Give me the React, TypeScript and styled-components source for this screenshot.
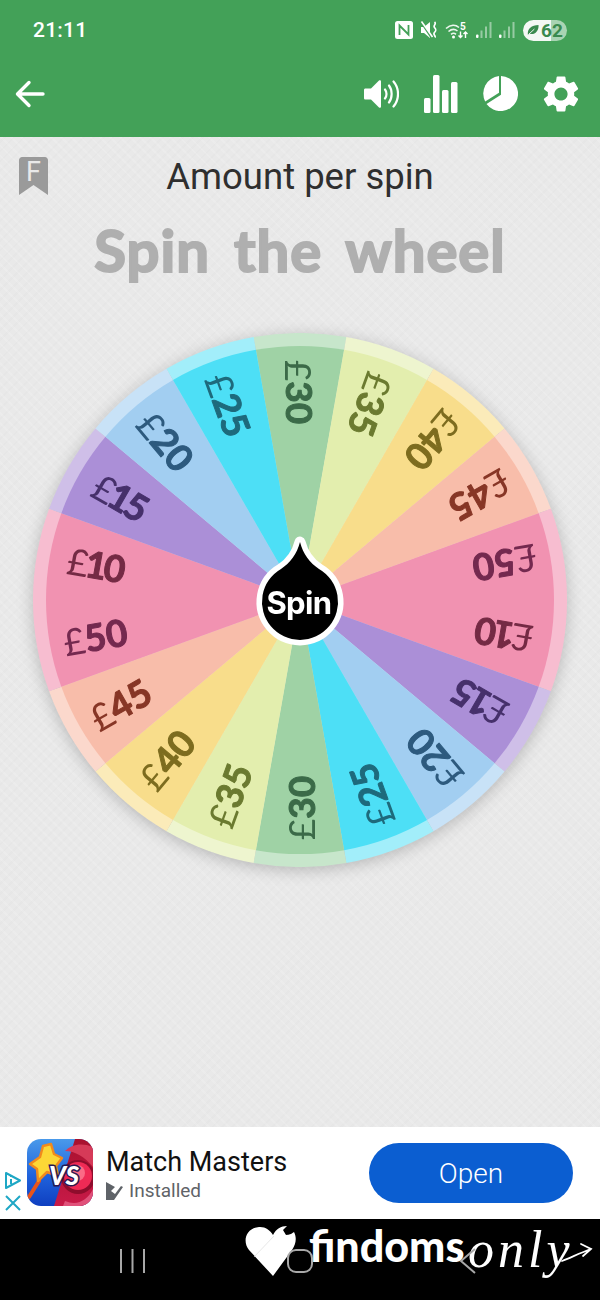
import React from "react";
import styled, { createGlobalStyle } from "styled-components";
import { MdSettings } from "react-icons/md";

const Global = createGlobalStyle`
  html, body { margin: 0; padding: 0; background: #000; }
  #root { width: 600px; height: 1300px; overflow: hidden; }
`;

const Page = styled.div`
  width: 600px;
  height: 1300px;
  display: flex;
  flex-direction: column;
  font-family: Roboto, "Liberation Sans", sans-serif;
`;

const Header = styled.header`
  background: #43a158;
  color: #fff;
  height: 137px;
  display: flex;
  flex-direction: column;
`;

const StatusBar = styled.div`
  height: 60px;
  display: flex;
  align-items: center;
  justify-content: space-between;
  padding: 0 33px;
`;

const Time = styled.span`
  font-size: 21px;
  font-weight: 500;
  letter-spacing: 0.2px;
`;

const StatusIcons = styled.div`
  display: flex;
  align-items: center;
  gap: 7px;
`;

const Battery = styled.div`
  width: 44px;
  height: 21px;
  margin-left: 1px;
  border-radius: 11px;
  display: flex;
  align-items: center;
  gap: 2px;
  padding-left: 4px;
  box-sizing: border-box;
  color: #3a8a4e;
  font-size: 19px;
  font-weight: 700;
  background: linear-gradient(90deg, #f4f8f4 0 63%, #a9d4b3 63% 100%);
`;

const Toolbar = styled.div`
  flex: 1;
  display: flex;
  align-items: center;
  justify-content: space-between;
  padding: 0 21px 10px 15px;
`;

const ToolGroup = styled.div`
  display: flex;
  align-items: center;
  gap: 25px;
`;

const Gear = styled(MdSettings)`
  margin: -4px;
`;

const Main = styled.main`
  position: relative;
  flex: 1;
  display: flex;
  flex-direction: column;
  align-items: center;
  background-color: #e9e9e9;
  background-image:
    repeating-linear-gradient(45deg, rgba(255, 255, 255, 0.13) 0 2px, transparent 2px 7px),
    repeating-linear-gradient(-45deg, rgba(190, 190, 190, 0.06) 0 2px, transparent 2px 7px);
`;

const Ribbon = styled.svg`
  position: absolute;
  left: 19px;
  top: 20px;
`;

const Prompt = styled.h2`
  margin: 20px 0 0;
  height: 40px;
  line-height: 40px;
  font-size: 36.5px;
  font-weight: 400;
  color: #2f2f2f;
`;

const Title = styled.h1`
  margin: 18px 0 0;
  height: 70px;
  line-height: 70px;
  font-family: Lato, "Noto Sans", sans-serif;
  font-size: 58px;
  font-weight: 700;
  letter-spacing: 1px;
  word-spacing: 9px;
  color: #afafaf;
  -webkit-text-stroke: 2px #afafaf;
`;

const Wheel = styled.svg`
  display: block;
  margin-top: 45px;
  overflow: visible;
  filter: drop-shadow(0 3px 8px rgba(0, 0, 0, 0.22));
`;

const Prize = styled.text<{ $tight: boolean }>`
  font-family: Lato, "Noto Sans", sans-serif;
  font-size: 37px;
  font-weight: 700;
  letter-spacing: ${(p) => (p.$tight ? "-3px" : "0")};
  text-anchor: middle;
  dominant-baseline: central;
  stroke-width: 1;
  stroke-linejoin: round;
`;

const Pound = styled.tspan`
  font-weight: 400;
  stroke-width: 0;
`;

const HubLabel = styled.text`
  font-family: Inter, Lato, sans-serif;
  font-size: 31px;
  font-weight: 700;
  fill: #fff;
  text-anchor: middle;
  letter-spacing: -0.6px;
`;

const Ad = styled.section`
  position: relative;
  height: 92px;
  background: #fff;
  display: flex;
  align-items: center;
  padding: 0 27px;
  box-sizing: border-box;
`;

const AdChoices = styled.div`
  position: absolute;
  left: 0;
  top: 42px;
  width: 25px;
  height: 50px;
  display: flex;
  flex-direction: column;
  align-items: center;
  gap: 5px;
  padding-top: 2px;
  box-sizing: border-box;
  background: #fff;
`;

const AppIcon = styled.svg`
  flex: none;
  border-radius: 14px;
  margin-top: -1px;
`;

const AdText = styled.div`
  flex: 1;
  margin-left: 13px;
  padding-top: 3px;
  display: flex;
  flex-direction: column;
`;

const AdTitle = styled.div`
  font-size: 27px;
  line-height: 32px;
  color: #111;
`;

const AdStatus = styled.div`
  display: flex;
  align-items: center;
  gap: 6px;
  font-size: 19px;
  line-height: 26px;
  color: #5f6368;
`;

const OpenButton = styled.button`
  width: 204px;
  height: 60px;
  border: 0;
  border-radius: 30px;
  background: #0b5ed1;
  color: #fff;
  font-family: Roboto, sans-serif;
  font-size: 28px;
  font-weight: 300;
`;

const Nav = styled.nav`
  position: relative;
  flex: none;
  height: 81px;
  background: #000;
  display: grid;
  grid-template-columns: repeat(3, 168px);
  padding: 3px 48px 0;
  box-sizing: border-box;
  align-items: center;
  justify-items: center;
`;

const NavIcon = styled.svg`
  position: relative;
  z-index: 2;
`;

const Logo = styled.svg`
  position: absolute;
  left: 240px;
  top: 0;
  z-index: 1;
`;

const BrandWord = styled.text`
  font-family: Lato, sans-serif;
  font-size: 43px;
  font-weight: 900;
  fill: #fff;
`;

const ScriptWord = styled.text`
  font-family: "Liberation Serif", serif;
  font-style: italic;
  font-size: 52px;
  letter-spacing: 4px;
  fill: #fff;
`;

type Segment = { label: string; fill: string; rim: string; ink: string };

const kinds: Record<string, Segment> = {
  "30": { label: "30", fill: "#9fd2a5", rim: "#c7e6cb", ink: "#3b6a48" },
  "35": { label: "35", fill: "#e3eeae", rim: "#eef5cf", ink: "#6b7a30" },
  "40": { label: "40", fill: "#f8dd8b", rim: "#fbebb9", ink: "#7d6c1f" },
  "45": { label: "45", fill: "#f8bdaa", rim: "#fbd8cc", ink: "#873626" },
  "50": { label: "50", fill: "#f192b1", rim: "#f7bdd0", ink: "#74294f" },
  "10": { label: "10", fill: "#f192b1", rim: "#f7bdd0", ink: "#742a44" },
  "15": { label: "15", fill: "#ab8fd7", rim: "#cfbfe8", ink: "#46306b" },
  "20": { label: "20", fill: "#a2cef1", rim: "#c8e2f7", ink: "#2d5a7e" },
  "25": { label: "25", fill: "#4ddff6", rim: "#a2eefa", ink: "#1e6a7c" },
};

const order = ["30", "35", "40", "45", "50", "10", "15", "20", "25", "30", "35", "40", "45", "50", "10", "15", "20", "25"];

const CX = 270;
const CY = 270;
const LABEL_RADIUS = 208;

const wedge = (index: number, r: number) => {
  const toPoint = (deg: number) => {
    const a = ((deg - 90) * Math.PI) / 180;
    return `${(CX + r * Math.cos(a)).toFixed(2)} ${(CY + r * Math.sin(a)).toFixed(2)}`;
  };
  const mid = index * 20;
  return `M${CX} ${CY} L${toPoint(mid - 10)} A${r} ${r} 0 0 1 ${toPoint(mid + 10)} Z`;
};

const SpinWheel = () => (
  <Wheel width={540} height={540} viewBox="0 0 540 540">
    {order.map((key, i) => (
      <path key={`rim${i}`} d={wedge(i, 267)} fill={kinds[key].rim} />
    ))}
    {order.map((key, i) => (
      <path key={`fill${i}`} d={wedge(i, 254)} fill={kinds[key].fill} />
    ))}
    {order.map((key, i) => (
      <Prize
        key={`t${i}`}
        $tight={key === "10" || key === "15"}
        x={CX}
        y={CY - LABEL_RADIUS}
        fill={kinds[key].ink}
        stroke={kinds[key].ink}
        transform={`rotate(${i * 20} ${CX} ${CY}) rotate(90 ${CX} ${CY - LABEL_RADIUS})`}
      >
        <Pound>£</Pound>
        {kinds[key].label}
      </Prize>
    ))}
    <path
      d="M270 212 C273 224 280 233 289 239 A38 38 0 1 1 251 239 C260 233 267 224 270 212 Z"
      fill="#000"
      stroke="#fff"
      strokeWidth={11}
      strokeLinejoin="round"
      paintOrder="stroke"
    />
    <HubLabel x={269} y={284}>Spin</HubLabel>
  </Wheel>
);

const NfcIcon = () => (
  <svg width="18" height="18" viewBox="0 0 18 18">
    <rect x="0" y="0" width="18" height="18" rx="2.5" fill="#fff" />
    <path d="M4.500 14V4.500L13.500 13.500V4" fill="none" stroke="#43a158" strokeWidth="1.800" />
  </svg>
);

const MuteIcon = () => (
  <svg width="18" height="18" viewBox="0 0 18 18" fill="#fff">
    <path d="M1 6h3l6-5v16l-6-5H1z" />
    <path d="M1 1l10 15" stroke="#43a158" strokeWidth="2" />
    <path d="M1.500 0.500l11 15.500" stroke="#fff" strokeWidth="1.600" />
    <path d="M14.500 1c2.500 2-1.800 3.500 0 5.500s2 3 0 5 1.500 3 .5 5" fill="none" stroke="#fff" strokeWidth="1.700" />
  </svg>
);

const WifiIcon = () => (
  <svg width="24" height="17" viewBox="0 0 24 17" fill="none" stroke="#fff">
    <path d="M1 6.500c4.500-4 9.500-4 13-1M3.500 9.500c3-2.500 6.500-2.500 9-.5M6 12.300c1.700-1.300 3.500-1.300 5 0" strokeWidth="1.600" opacity=".9" />
    <circle cx="8.500" cy="15" r="1.500" fill="#fff" stroke="none" />
    <text x="15" y="7.500" fill="#fff" stroke="none" fontFamily="Roboto" fontWeight="700" fontSize="10">5</text>
    <path d="M15.500 9.500v6M13.500 13.500l2 2 2-2M20.500 16v-6M18.500 12l2-2 2 2" strokeWidth="1.400" />
  </svg>
);

const SignalIcon = () => (
  <svg width="16" height="16" viewBox="0 0 16 16" fill="#fff">
    <rect x="0" y="12.500" width="2.500" height="3.500" rx="1" />
    <g opacity=".45">
      <rect x="4.500" y="8.500" width="2" height="7.500" />
      <rect x="9" y="4.500" width="2" height="11.500" />
      <rect x="13.500" y="0" width="2" height="16" />
    </g>
  </svg>
);

const App = () => (
  <Page>
    <Global />
    <Header>
      <StatusBar>
        <Time>21:11</Time>
        <StatusIcons>
          <NfcIcon />
          <MuteIcon />
          <WifiIcon />
          <SignalIcon />
          <SignalIcon />
          <Battery>
            <svg width="12" height="12" viewBox="0 0 13 13">
              <path d="M1 12C0 5 5 1 12.500 1 13 8 8 12 3 10.500Z" fill="#3a8a4e" />
              <path d="M1.500 11.500 8 5.500" stroke="#fff" strokeWidth="1" />
            </svg>
            62
          </Battery>
        </StatusIcons>
      </StatusBar>
      <Toolbar>
        <svg width="30" height="28" viewBox="0 0 30 28" fill="none" stroke="#fff" strokeWidth="3.400" strokeLinecap="round" strokeLinejoin="round">
          <path d="M28 14H3M14 2.500 2.500 14 14 25.500" />
        </svg>
        <ToolGroup>
          <svg width="35" height="30" viewBox="0 0 35 30" fill="none">
            <path d="M1.500 9.500H7L15 1.500c1-.7 2-.2 2 1v25c0 1.200-1 1.700-2 1L7 20.500H1.500C.6 20.500 0 20 0 19V11c0-1 .6-1.500 1.500-1.500z" fill="#fff" />
            <path d="M21 10.500c2 2.500 2 6.500 0 9M25 6.500c3.500 4.500 3.500 12.500 0 17M29.500 2.500c6 7 6 18 0 25" stroke="#fff" strokeWidth="2.200" strokeLinecap="round" />
          </svg>
          <svg width="34" height="38" viewBox="0 0 34 38" fill="#fff">
            <rect x="0" y="23" width="6.500" height="15" rx="1.500" />
            <rect x="9" y="0" width="6.500" height="38" rx="1.500" />
            <rect x="18" y="15" width="6.500" height="23" rx="1.500" />
            <rect x="27" y="7" width="6.500" height="31" rx="1.500" />
          </svg>
          <svg width="35" height="35" viewBox="0 0 35 35" fill="#fff">
            <path d="M16 .1V16.800L2.200 25.500A17.500 17.500 0 0 1 16 .1Z" />
            <path d="M18 .1A17.500 17.500 0 1 1 3.500 28L18 18.800Z" />
          </svg>
          <Gear size={44} color="#fff" />
        </ToolGroup>
      </Toolbar>
    </Header>
    <Main>
      <Ribbon width="29" height="39" viewBox="0 0 29 39">
        <path d="M3 0H26C27.500 0 29 1.500 29 3V38L14.500 28 0 38V3C0 1.500 1.500 0 3 0Z" fill="#9a9a9a" />
        <text x="7" y="24" fontFamily="Roboto" fontSize="27" fill="#e9e9e9">F</text>
      </Ribbon>
      <Prompt>Amount per spin</Prompt>
      <Title>Spin the wheel</Title>
      <SpinWheel />
    </Main>
    <Ad>
      <AppIcon width="66" height="67" viewBox="0 0 66 67">
        <defs>
          <linearGradient id="blueSide" x1="0" y1="0" x2="0" y2="1">
            <stop offset="0" stopColor="#4a9aea" />
            <stop offset=".55" stopColor="#1f62dc" />
            <stop offset="1" stopColor="#0f3fc0" />
          </linearGradient>
          <linearGradient id="redSide" x1="0" y1="0" x2="0" y2="1">
            <stop offset="0" stopColor="#a8112e" />
            <stop offset="1" stopColor="#c81a48" />
          </linearGradient>
        </defs>
        <rect width="66" height="67" fill="url(#blueSide)" />
        <path d="M48 0H66V67H27Z" fill="url(#redSide)" />
        <path d="M38 12C44 6 54 3 66 8V28C58 18 48 12 38 12Z" fill="#d63a58" />
        <path d="M38 62C50 67 60 62 66 50V67H36Z" fill="#e0527a" />
        <circle cx="51" cy="38" r="17" fill="#8e0d2c" />
        <circle cx="51" cy="37" r="14" fill="#ef2a55" />
        <circle cx="50" cy="34" r="8" fill="#fb6a86" />
        <path d="M2 58 12 42" stroke="#e8541c" strokeWidth="4" strokeLinecap="round" />
        <path d="M16 7 24 5 27 15 35 19 29 27 31 37 20 33 11 42 10 30 3 25 13 18Z" fill="#fcd736" stroke="#f08a1d" strokeWidth="2.500" strokeLinejoin="round" />
        <text x="22" y="46" fontFamily="Lato" fontStyle="italic" fontWeight="900" fontSize="26" fill="#fff" stroke="#2a1750" strokeWidth="3" paintOrder="stroke">VS</text>
      </AppIcon>
      <AdText>
        <AdTitle>Match Masters</AdTitle>
        <AdStatus>
          <svg width="17" height="18" viewBox="0 0 17 18" fill="#5f6368">
            <path d="M0 0 9 5 5 9 9 12 15 4 17 5 8 18 0 18Z" />
          </svg>
          Installed
        </AdStatus>
      </AdText>
      <OpenButton>Open</OpenButton>
      <AdChoices>
        <svg width="18" height="19" viewBox="0 0 18 19" fill="none" stroke="#1ea7c5" strokeWidth="2">
          <path d="M2 2 16 9.500 2 17Z" strokeLinejoin="round" />
          <path d="M7 8v5M7 5v1" />
        </svg>
        <svg width="16" height="16" viewBox="0 0 16 16" fill="none" stroke="#1ea7c5" strokeWidth="2">
          <path d="M1 1 15 15M15 1 1 15" />
        </svg>
      </AdChoices>
    </Ad>
    <Nav>
      <NavIcon width="25" height="24" viewBox="0 0 25 24" fill="#a8a8a8">
        <rect x="0" y="0" width="2" height="24" />
        <rect x="11.500" y="0" width="2" height="24" />
        <rect x="23" y="0" width="2" height="24" />
      </NavIcon>
      <NavIcon width="26" height="24" viewBox="0 0 26 24" fill="none" stroke="#a8a8a8" strokeWidth="2">
        <rect x="1" y="1" width="24" height="22" rx="8" />
      </NavIcon>
      <NavIcon width="18" height="26" viewBox="0 0 18 26" fill="none" stroke="#a8a8a8" strokeWidth="2">
        <path d="M16 1 2 13 16 25" />
      </NavIcon>
      <Logo width="360" height="81" viewBox="0 0 360 81">
        <path d="M33 57 9 31C2 22 6 9 19 8c6-.5 11 3 14 8 3-6 8-9 14-9l-4 4 3 5 5-1 3-2c3 6 2 12-2 18Z" fill="#fff" />
        <circle cx="48" cy="13" r="2.500" fill="#000" />
        <path d="M14 38 34 17" stroke="#ddd" strokeWidth=".7" />
        <BrandWord x="69" y="43">findoms</BrandWord>
        <ScriptWord x="228" y="48">only</ScriptWord>
        <path d="M322 42C330 39 340 34 351 30M341 25 351 30 343 37" fill="none" stroke="#fff" strokeWidth="1.800" strokeLinecap="round" />
      </Logo>
    </Nav>
  </Page>
);

export default App;
